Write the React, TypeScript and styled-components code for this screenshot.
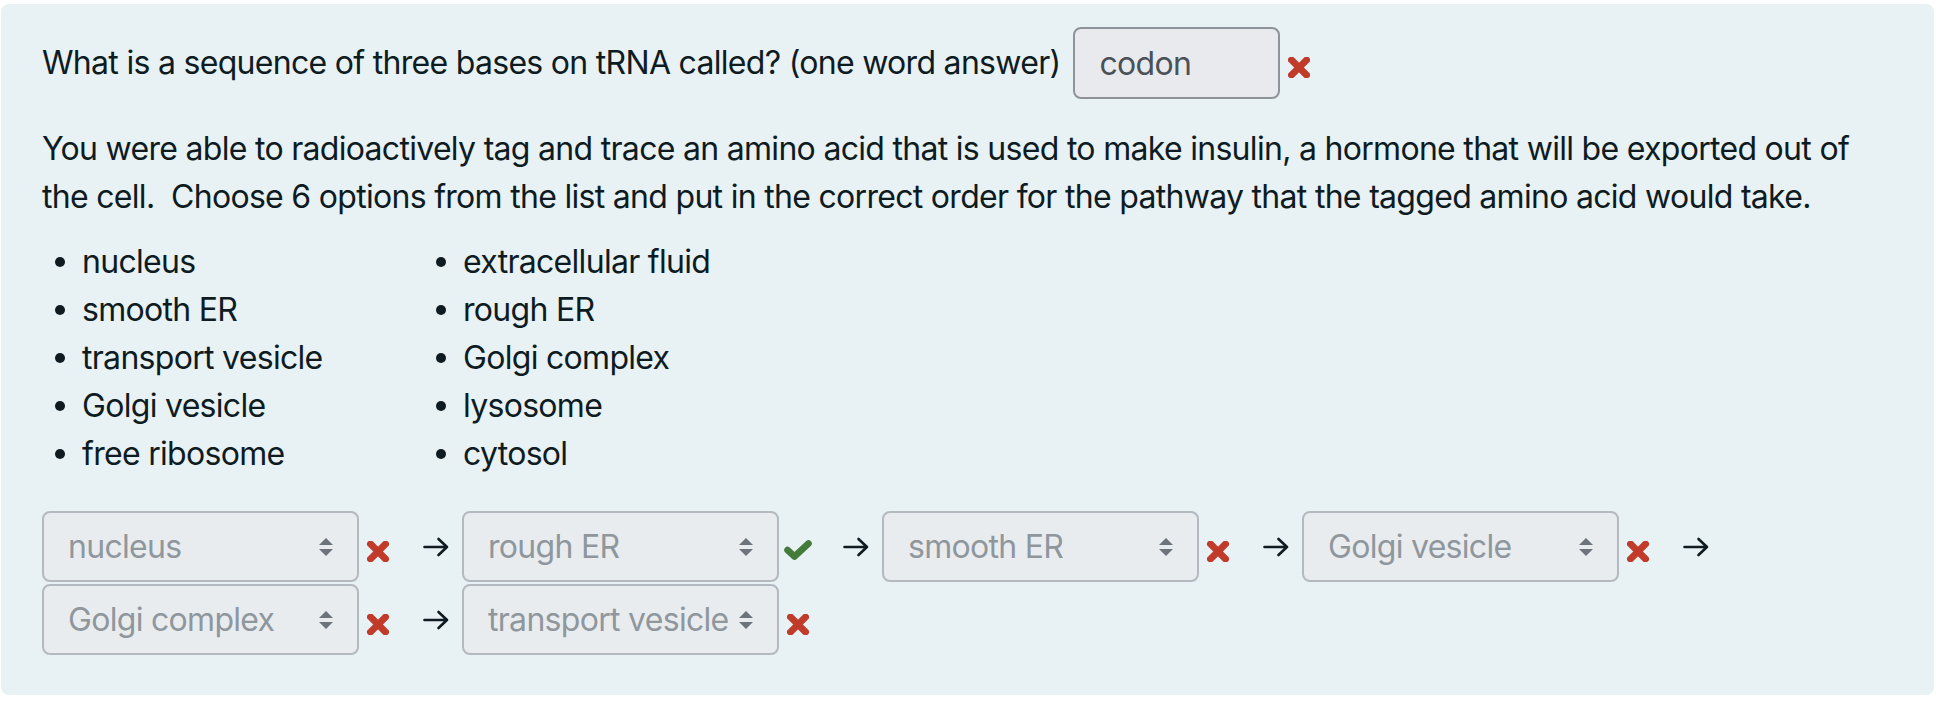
import styled, { createGlobalStyle } from "styled-components";

const GlobalStyle = createGlobalStyle`
  html, body {
    margin: 0;
    padding: 0;
    background: #ffffff;
  }

  body {
    font-family: Inter, "Noto Sans", "Liberation Sans", sans-serif;
    color: #0e1b21;
  }

  * {
    box-sizing: border-box;
  }
`;

const leftColumn = ["nucleus", "smooth ER", "transport vesicle", "Golgi vesicle", "free ribosome"];
const rightColumn = ["extracellular fluid", "rough ER", "Golgi complex", "lysosome", "cytosol"];

const answers = [
  { value: "nucleus", correct: false },
  { value: "rough ER", correct: true },
  { value: "smooth ER", correct: false },
  { value: "Golgi vesicle", correct: false },
  { value: "Golgi complex", correct: false },
  { value: "transport vesicle", correct: false },
];

export default function App() {
  return (
    <>
      <GlobalStyle />
      <Panel>
        <QuestionLine>
          <span>What is a sequence of three bases on tRNA called? (one word answer)</span>
          <AnswerInput type="text" value="codon" disabled readOnly />
          <Mark>
            <Cross />
          </Mark>
        </QuestionLine>

        <Paragraph>
          You were able to radioactively tag and trace an amino acid that is used to make insulin, a
          hormone that will be exported out of the cell.&nbsp; Choose 6 options from the list and put
          in the correct order for the pathway that the tagged amino acid would take.
        </Paragraph>

        <OptionList>
          {[...leftColumn, ...rightColumn].map((item) => (
            <OptionItem key={item}>{item}</OptionItem>
          ))}
        </OptionList>

        <Steps>
          {answers.map((each, index) => (
            <Step key={index}>
              <SelectWrap>
                <Dropdown value={each.value} disabled>
                  <option value={each.value}>{each.value}</option>
                </Dropdown>
                <UpDown />
              </SelectWrap>
              <MarkSlot $check={each.correct}>{each.correct ? <Check /> : <Cross />}</MarkSlot>
              {index < answers.length - 1 && <Arrow />}
            </Step>
          ))}
        </Steps>
      </Panel>
    </>
  );
}

// 아이콘들
function Cross() {
  return (
    <svg width="22" height="21" viewBox="0 0 22 21">
      <path
        d="M3.5 3 L18.5 18 M18.5 3 L3.5 18"
        stroke="#c13b2b"
        strokeWidth="6.8"
        strokeLinecap="square"
      />
    </svg>
  );
}

function Check() {
  return (
    <svg width="28" height="20" viewBox="0 0 28 20">
      <path
        d="M3.5 10 L10.5 16.5 L24.5 3.5"
        fill="none"
        stroke="#437c3a"
        strokeWidth="6.6"
        strokeLinecap="round"
        strokeLinejoin="round"
      />
    </svg>
  );
}

function Arrow() {
  return (
    <ArrowBox>
      <svg width="26" height="20" viewBox="0 0 26 20">
        <path
          d="M1.5 10 H24 M15.5 2 L24 10 L15.5 18"
          fill="none"
          stroke="#0e1b21"
          strokeWidth="2.6"
          strokeLinecap="round"
          strokeLinejoin="round"
        />
      </svg>
    </ArrowBox>
  );
}

function UpDown() {
  return (
    <UpDownIcon width="16" height="20" viewBox="0 0 16 20">
      <path d="M8 1 L15 8 H1 Z" fill="#6c737a" />
      <path d="M8 19 L15 12 H1 Z" fill="#6c737a" />
    </UpDownIcon>
  );
}

const Panel = styled.div`
  margin: 4px 2px 7px 1px;
  padding: 23px 41px 40px 41px;

  background-color: #e8f1f4;
  border-radius: 8px;

  font-size: 32px;
  line-height: 48px;
  letter-spacing: -0.7px;
`;

const QuestionLine = styled.div`
  display: flex;
  align-items: center;

  height: 72px;
`;

const AnswerInput = styled.input`
  width: 207px;
  height: 72px;

  margin-left: 13px;
  padding: 0 24px;

  background-color: #e9eaee;
  border: 2px solid #8e9399;
  border-radius: 8px;

  font-family: inherit;
  font-size: 32px;
  letter-spacing: -0.7px;
  color: #4a5157;
  -webkit-text-fill-color: #4a5157;
  opacity: 1;
`;

const Mark = styled.span`
  display: flex;

  margin-left: 8px;
  margin-top: 8px;
`;

const Paragraph = styled.p`
  margin: 26px 0 0 0;
`;

const OptionList = styled.ul`
  display: grid;
  grid-template-columns: 381px auto;
  grid-template-rows: repeat(5, 48px);
  grid-auto-flow: column;

  margin: 17px 0 0 0;
  padding: 0;

  list-style: none;
`;

const OptionItem = styled.li`
  display: flex;
  align-items: center;
  gap: 17px;

  padding-left: 13px;

  &::before {
    content: "";

    width: 10px;
    height: 10px;

    border-radius: 50%;
    background-color: currentColor;
  }
`;

const Steps = styled.div`
  display: flex;
  flex-wrap: wrap;
  row-gap: 2px;

  margin-top: 33px;
`;

const Step = styled.div`
  display: flex;
  align-items: center;
`;

const SelectWrap = styled.div`
  position: relative;

  width: 317px;
  height: 71px;
`;

const Dropdown = styled.select`
  width: 100%;
  height: 100%;

  padding: 0 44px 0 24px;

  appearance: none;
  background-color: #e9ecef;
  border: 2px solid #b3b9be;
  border-radius: 8px;

  font-family: inherit;
  font-size: 32px;
  letter-spacing: -0.7px;
  color: #8f979d;
  opacity: 1;
`;

const UpDownIcon = styled.svg`
  position: absolute;
  top: 26px;
  right: 25px;
`;

const MarkSlot = styled.span<{ $check: boolean }>`
  display: flex;
  align-items: center;

  width: 64px;
  height: 21px;

  margin-top: ${(props) => (props.$check ? 6 : 9)}px;
  padding-left: ${(props) => (props.$check ? 5 : 8)}px;
`;

const ArrowBox = styled.span`
  display: flex;

  width: 39px;
`;
